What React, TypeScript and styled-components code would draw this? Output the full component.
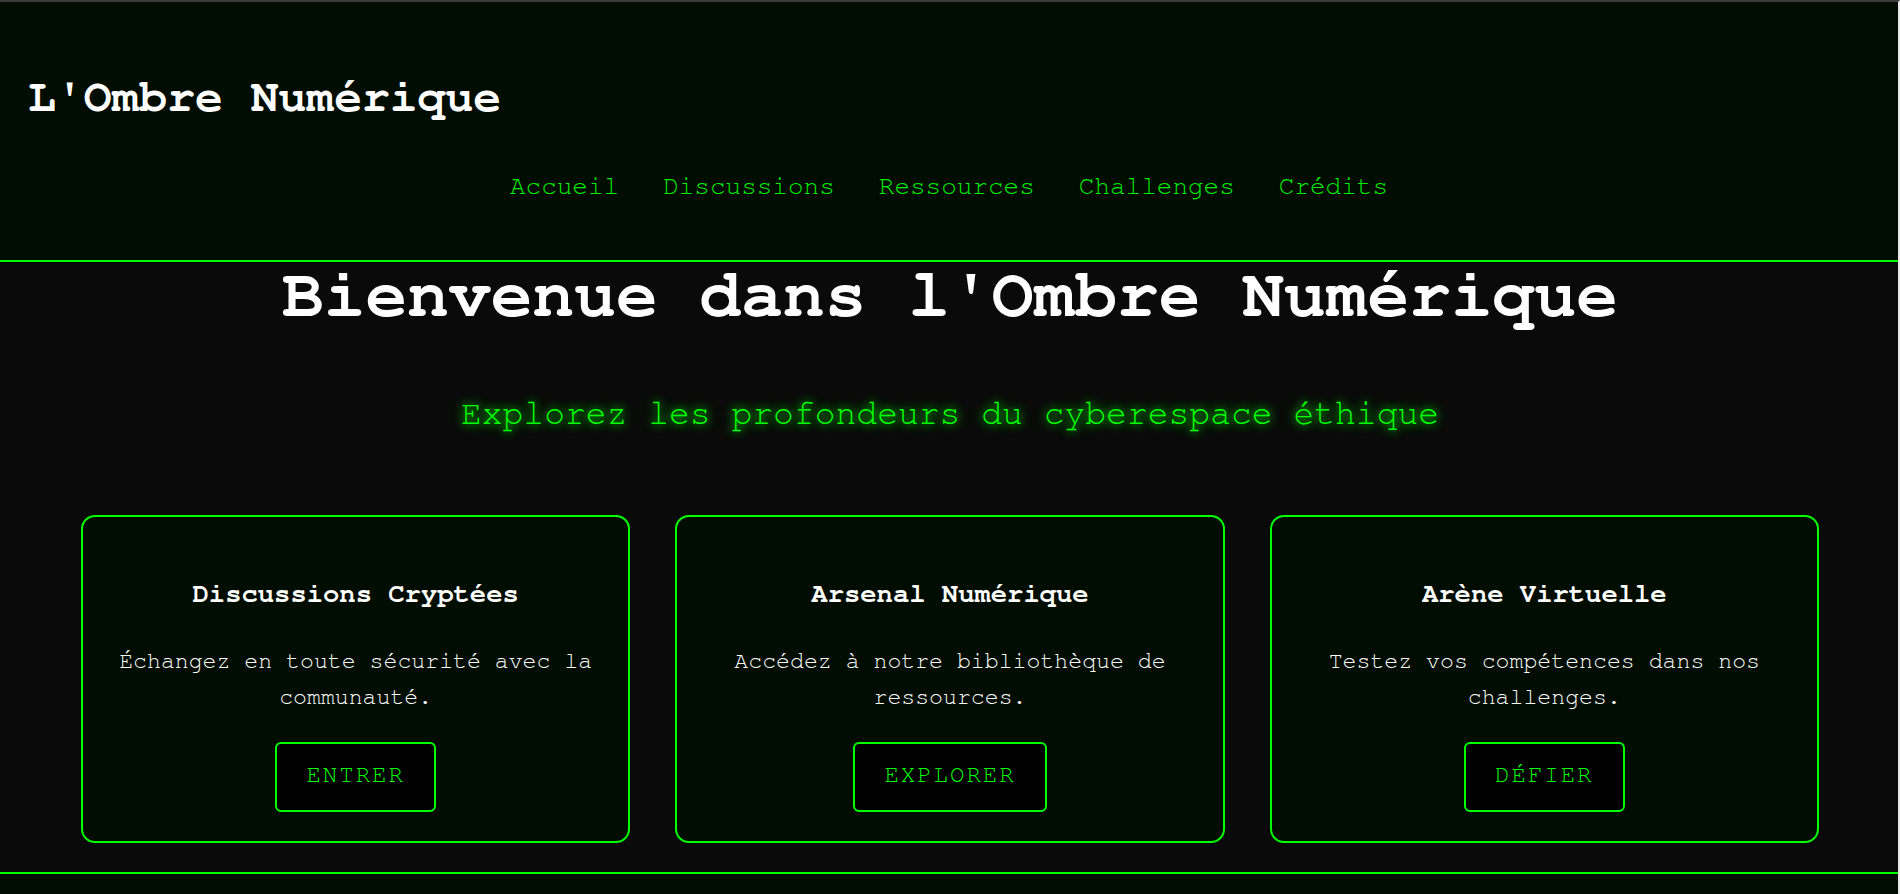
import React from "react";
import styled, { createGlobalStyle } from "styled-components";

const GlobalStyle = createGlobalStyle`
  html, body {
    margin: 0;
    padding: 0;
    background: #0a0a0a;
  }
  body {
    font-family: FreeMono, "Courier New", "Liberation Mono", monospace;
    color: #ffffff;
  }
  * { box-sizing: border-box; }
`;

const Page = styled.div`
  min-height: 100vh;
  border-top: 2px solid #3c3c3c;
  border-right: 2px solid #e8e8e8;
  background: #0a0a0a;
  display: flex;
  flex-direction: column;
`;

const Header = styled.header`
  background: #020d02;
  border-bottom: 2px solid #00ff00;
  padding: 68px 28px 59px;
  display: flex;
  flex-direction: column;
  gap: 47px;
`;

const SiteTitle = styled.h1`
  margin: 0;
  font-size: 46.4px;
  line-height: 54px;
  font-weight: 700;
  color: #ffffff;
`;

const Nav = styled.nav`
  display: flex;
  justify-content: center;
  gap: 44px;
`;

const NavLink = styled.a`
  font-size: 26px;
  line-height: 30px;
  color: #00ee00;
  text-decoration: none;
  cursor: pointer;
`;

const Main = styled.main`
  display: flex;
  flex-direction: column;
  align-items: center;
  padding: 0 79px 29px 81px;
`;

const HeroTitle = styled.h2`
  margin: 0;
  font-size: 69.6px;
  line-height: 66px;
  font-weight: 700;
  color: #ffffff;
  text-align: center;
`;

const Tagline = styled.p`
  margin: 66px 0 0;
  font-size: 34.7px;
  line-height: 40px;
  color: #00ff00;
  text-shadow: 0 0 10px #00ff00, 0 0 18px rgba(0, 255, 0, 0.35);
  text-align: center;
`;

const CardGrid = styled.section`
  margin-top: 81px;
  width: 100%;
  display: grid;
  grid-template-columns: repeat(3, 1fr);
  gap: 45px;
`;

const Card = styled.article`
  background: #020d02;
  border: 2px solid #00ff00;
  border-radius: 14px;
  padding: 61px 30px 29px;
  display: flex;
  flex-direction: column;
  align-items: center;
  text-align: center;
`;

const CardTitle = styled.h3`
  margin: 0;
  font-size: 27.2px;
  line-height: 32px;
  font-weight: 700;
  color: #ffffff;
`;

const CardText = styled.p`
  margin: 33px 0 0;
  font-size: 23.2px;
  line-height: 36px;
  color: #ffffff;
`;

const CardButton = styled.button`
  margin-top: 27px;
  background: #000000;
  border: 2px solid #00ff00;
  border-radius: 6px;
  padding: 17px 29px 20px;
  font-family: inherit;
  font-size: 24px;
  line-height: 29px;
  letter-spacing: 2px;
  color: #00ff00;
  cursor: pointer;
`;

const Footer = styled.footer`
  background: #020d02;
  border-top: 2px solid #00ff00;
  padding: 30px;
  text-align: center;
  color: #00cc00;
  font-size: 16px;
`;

const navItems = ["Accueil", "Discussions", "Ressources", "Challenges", "Crédits"];

const cards = [
  {
    title: "Discussions Cryptées",
    text: "Échangez en toute sécurité avec la communauté.",
    action: "ENTRER",
  },
  {
    title: "Arsenal Numérique",
    text: "Accédez à notre bibliothèque de ressources.",
    action: "EXPLORER",
  },
  {
    title: "Arène Virtuelle",
    text: "Testez vos compétences dans nos challenges.",
    action: "DÉFIER",
  },
];

export default function App() {
  return (
    <>
      <GlobalStyle />
      <Page>
        <Header>
          <SiteTitle>L'Ombre Numérique</SiteTitle>
          <Nav>
            {navItems.map((item) => (
              <NavLink key={item}>{item}</NavLink>
            ))}
          </Nav>
        </Header>
        <Main>
          <HeroTitle>Bienvenue dans l'Ombre Numérique</HeroTitle>
          <Tagline>Explorez les profondeurs du cyberespace éthique</Tagline>
          <CardGrid>
            {cards.map((c) => (
              <Card key={c.title}>
                <CardTitle>{c.title}</CardTitle>
                <CardText>{c.text}</CardText>
                <CardButton>{c.action}</CardButton>
              </Card>
            ))}
          </CardGrid>
        </Main>
        <Footer>© 2024 L'Ombre Numérique — Tous droits réservés</Footer>
      </Page>
    </>
  );
}
